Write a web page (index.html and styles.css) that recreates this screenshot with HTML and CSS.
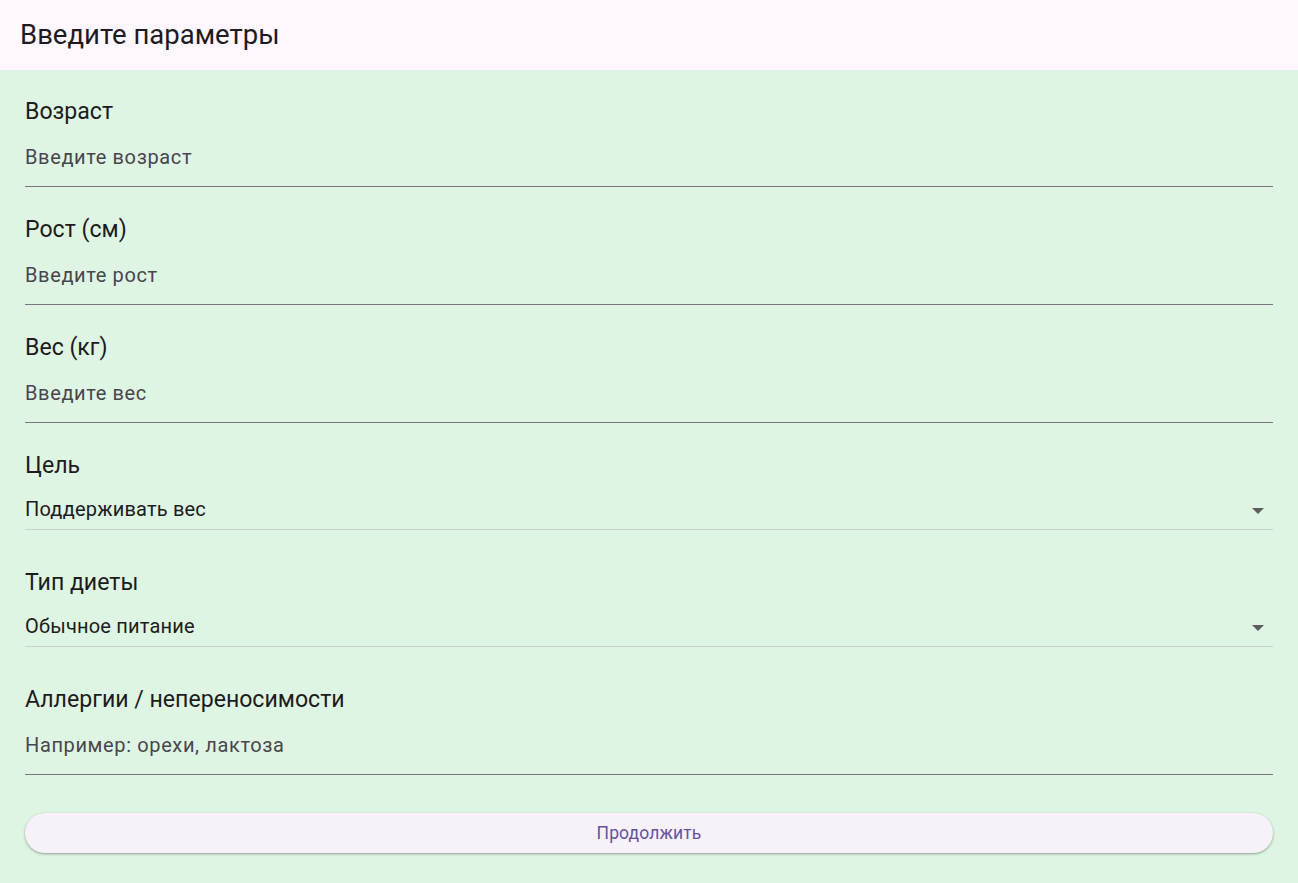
FILE: index.html
```html
<!DOCTYPE html>
<html lang="ru">
<head>
<meta charset="utf-8">
<title>Введите параметры</title>
<link rel="stylesheet" href="styles.css">
</head>
<body>
<header class="app-bar">
  <h1 class="app-title">Введите параметры</h1>
</header>
<main class="form">
  <div class="group group-text">
    <div class="label">Возраст</div>
    <div class="text-field"><span class="hint">Введите возраст</span></div>
  </div>
  <div class="group group-text">
    <div class="label">Рост (см)</div>
    <div class="text-field"><span class="hint">Введите рост</span></div>
  </div>
  <div class="group group-text">
    <div class="label">Вес (кг)</div>
    <div class="text-field"><span class="hint">Введите вес</span></div>
  </div>
  <div class="group group-drop">
    <div class="label">Цель</div>
    <div class="dropdown"><span class="value">Поддерживать вес</span><span class="arrow"></span></div>
  </div>
  <div class="group group-drop">
    <div class="label">Тип диеты</div>
    <div class="dropdown"><span class="value">Обычное питание</span><span class="arrow"></span></div>
  </div>
  <div class="group group-text group-last">
    <div class="label">Аллергии / непереносимости</div>
    <div class="text-field"><span class="hint">Например: орехи, лактоза</span></div>
  </div>
  <button class="btn" type="button">Продолжить</button>
</main>
</body>
</html>
```

FILE: styles.css
```css
html, body {
  margin: 0;
  padding: 0;
  height: 100%;
}
body {
  background: #dff5e3;
  font-family: Roboto, "Noto Sans", sans-serif;
  color: #1d1b20;
}
.app-bar {
  height: 70px;
  background: #fef7ff;
  display: flex;
  align-items: center;
  padding-left: 20px;
}
.app-title {
  margin: 0;
  font-size: 27.5px;
  font-weight: 400;
  line-height: 32px;
  color: #1d1b20;
}
.form {
  display: flex;
  flex-direction: column;
  padding: 29px 25px 0;
}
.group {
  display: flex;
  flex-direction: column;
}
.label {
  height: 24px;
  line-height: 26px;
  font-size: 23.1px;
  color: #1d1b20;
}
.text-field {
  margin-top: 8px;
  height: 56px;
  box-sizing: border-box;
  border-bottom: 1px solid #79747e;
  padding-top: 14px;
}
.hint {
  display: block;
  line-height: 24px;
  font-size: 20px;
  letter-spacing: 0.63px;
  color: #49454f;
}
.group-text {
  margin-bottom: 30px;
}
.group-last {
  margin-bottom: 38px;
}
.dropdown {
  margin-top: 8px;
  height: 45px;
  box-sizing: border-box;
  border-bottom: 1px solid #c9d1cb;
  padding-top: 12px;
  display: flex;
  justify-content: space-between;
  align-items: flex-start;
}
.value {
  line-height: 24px;
  font-size: 20px;
  letter-spacing: 0.19px;
  color: #1d1b20;
}
.arrow {
  margin-top: 11px;
  margin-right: 9px;
  width: 0;
  height: 0;
  border-left: 6px solid transparent;
  border-right: 6px solid transparent;
  border-top: 6px solid #5d5d5d;
}
.group-drop {
  margin-bottom: 40px;
}
.btn {
  height: 40px;
  border: none;
  border-radius: 20px;
  background: #f7f2fa;
  color: #6750a4;
  font-family: Roboto, "Noto Sans", sans-serif;
  font-size: 17.5px;
  letter-spacing: 0.125px;
  box-shadow: 0 1px 2px rgba(0,0,0,0.25), 0 1px 3px 1px rgba(0,0,0,0.08);
  padding: 0;
}
```
